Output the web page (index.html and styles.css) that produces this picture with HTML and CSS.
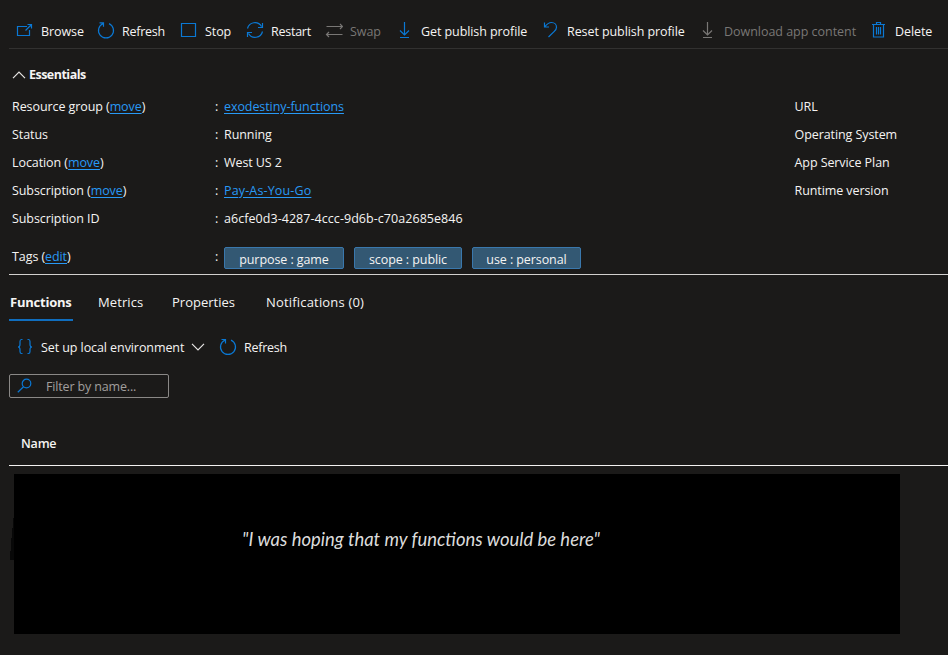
FILE: index.html
```html
<!DOCTYPE html>
<html lang="en">
<head>
<meta charset="utf-8">
<title>Function App</title>
<link rel="stylesheet" href="styles.css">
</head>
<body>
<nav class="toolbar">
  <button class="cmd"><svg class="icon" viewBox="0 0 18 18"><path d="M11 5.500H1.500v9h12V9M9.500 9.500L15 4M11.500 3.500h4v4"/></svg><span>Browse</span></button>
  <button class="cmd"><svg class="icon" viewBox="0 0 18 18"><path d="M12 2.600A7.500 7.500 0 1 1 6 2.600M2.500 1.800h4v4"/></svg><span class="t-refresh">Refresh</span></button>
  <button class="cmd"><svg class="icon" viewBox="0 0 18 18"><path d="M2.500 2.500h14v13h-14z"/></svg><span class="t-stop">Stop</span></button>
  <button class="cmd"><svg class="icon" viewBox="0 0 18 18"><path d="M1.500 7.500A7.600 7.600 0 0 1 15.500 5.500M16.500 2v4.500H12M16.500 10.500A7.600 7.600 0 0 1 2.500 12.500M1.500 16v-4.500H6"/></svg><span class="t-refresh">Restart</span></button>
  <button class="cmd off"><svg class="icon" viewBox="0 0 18 18"><path d="M1.500 5.500h16M15 3l2.500 2.500L15 8M17.500 13.500h-16M4 11l-2.500 2.500L4 16"/></svg><span>Swap</span></button>
  <button class="cmd"><svg class="icon" viewBox="0 0 18 18"><path d="M8.500 1v13M4 9.500l4.500 4.500L13 9.500M4 16.500h9"/></svg><span>Get publish profile</span></button>
  <button class="cmd"><svg class="icon" viewBox="0 0 18 18"><path d="M2.500 1.500v4.500H7M2.500 6C5 2.800 7 1.500 9.500 1.500c3 0 5 2.200 5 4.700 0 1.800-1 3-2.200 4.200L6.500 16"/></svg><span>Reset publish profile</span></button>
  <button class="cmd off"><svg class="icon" viewBox="0 0 18 18"><path d="M8.500 1v13M4 9.500l4.500 4.500L13 9.500M4 16.500h9"/></svg><span class="t-down">Download app content</span></button>
  <button class="cmd"><svg class="icon" viewBox="0 0 18 18"><path d="M2 3.500h13M6.500 3V1.500h4V3M3.500 3.500v12.500h10V3.500M6.500 6v7.500M8.500 6v7.500M10.500 6v7.500"/></svg><span>Delete</span></button>
</nav>

<section class="essentials">
  <h2 class="ess-title"><svg class="chev" viewBox="0 0 14 8"><path d="M1 7.200L7 1.200l6 6"/></svg><span>Essentials</span></h2>
  <div class="ess-body">
    <dl class="props">
      <dt>Resource group (<a href="#">move</a>)</dt><dd><i>:</i><a href="#">exodestiny-functions</a></dd>
      <dt>Status</dt><dd><i>:</i><span>Running</span></dd>
      <dt>Location (<a href="#">move</a>)</dt><dd><i>:</i><span>West US 2</span></dd>
      <dt>Subscription (<a href="#">move</a>)</dt><dd><i>:</i><a href="#" class="t-pay">Pay-As-You-Go</a></dd>
      <dt>Subscription ID</dt><dd><i>:</i><span class="t-guid">a6cfe0d3-4287-4ccc-9d6b-c70a2685e846</span></dd>
    </dl>
    <ul class="labels"><li>URL</li><li>Operating System</li><li>App Service Plan</li><li>Runtime version</li></ul>
  </div>
  <div class="tags">
    <span class="tags-label">Tags (<a href="#">edit</a>)</span><i>:</i>
    <span class="tag tag-a">purpose : game</span><span class="tag tag-b">scope : public</span><span class="tag tag-c">use : personal</span>
  </div>
</section>

<nav class="tabs">
  <a class="tab active">Functions</a><a class="tab">Metrics</a><a class="tab">Properties</a><a class="tab">Notifications (0)</a>
</nav>

<div class="subbar">
  <svg class="icon" viewBox="0 0 18 18"><path d="M6.500 1.500H5.500C4.300 1.500 4 2.300 4 3.500V6.500C4 8 3.200 9 2 9c1.200 0 2 1 2 2.500v2c0 1.200.3 2 1.500 2h1M11.500 1.500h1c1.200 0 1.500.8 1.500 2V6.500C14 8 14.800 9 16 9c-1.200 0-2 1-2 2.500v2c0 1.200-.3 2-1.500 2h-1"/></svg>
  <span class="setup">Set up local environment</span>
  <svg class="chev down" viewBox="0 0 14 8"><path d="M1 .800l6 6 6-6"/></svg>
  <svg class="icon ref" viewBox="0 0 18 18"><path d="M12 2.100A7.500 7.500 0 1 1 6 2.100M2.500 1.500h4v4"/></svg>
  <span class="t-refresh">Refresh</span>
</div>

<label class="filter"><svg class="search" viewBox="0 0 16 16"><circle cx="9.500" cy="5.500" r="4.300"/><path d="M6.500 8.700L.800 14.200"/></svg><span>Filter by name...</span></label>

<div class="thead">Name</div>
<main class="result">
  <svg class="smudge" viewBox="0 0 4 42"><path d="M3 0h1v42H0v-9h1V20h1V10h1z"/></svg>
  <p>"I was hoping that my functions would be here"</p>
</main>
</body>
</html>
```
FILE: styles.css
```css
* { box-sizing: border-box; }
body {
  margin: 0;
  height: 655px;
  overflow: hidden;
  background: #1b1a19;
  color: #f5f4f3;
  font: 12.5px/20px "Open Sans", "Noto Sans", sans-serif;
  letter-spacing: -0.08px;
  white-space: nowrap;
}
a { color: #2899f5; text-underline-offset: 2px; }
svg { fill: none; stroke: #0a78d4; stroke-width: 1.2; flex: none; display: block; }
.icon { width: 18px; height: 18px; }
.toolbar {
  display: grid;
  grid-template-columns: 81px 82px 67px 79px 71px 146px 157px 171px 70px;
  align-items: center;
  height: 49px;
  margin-left: 9px;
  padding: 12px 0 0 7px;
  border-bottom: 1px solid #323130;
}
.cmd {
  display: flex;
  gap: 7px;
  padding: 0;
  border: 0;
  background: none;
  color: inherit;
  font: inherit;
  letter-spacing: inherit;
}
.cmd span { height: 18px; line-height: 22px; }
.t-refresh { letter-spacing: -0.25px; }
.t-stop { padding-left: 1px; }
.t-down { letter-spacing: -0.03px; }
.off { color: #797775; }
.off svg { stroke: #797775; }

.essentials { height: 226px; margin-left: 9px; border-bottom: 1px solid #d2d0ce; }
.ess-title {
  display: flex;
  align-items: center;
  gap: 3px;
  margin: 0;
  padding: 16px 0 0 3px;
  font-size: 12.5px;
  line-height: 20px;
  letter-spacing: -0.52px;
}
.chev { width: 14px; height: 8px; stroke: #e8e6e4; }
.ess-body { display: flex; padding: 8px 0 0 3px; line-height: 28px; }
.props { display: grid; grid-template-columns: 203px 579.5px; margin: 0; }
.props dt, .props dd { margin: 0; height: 28px; }
.t-pay { letter-spacing: 0.15px; }
.t-guid { letter-spacing: 0.05px; }
i { display: inline-block; width: 9px; font-style: normal; }
.labels { list-style: none; margin: 0; padding: 0; }
.tags { display: flex; padding: 14px 0 0 3px; }
.tags-label { width: 203px; }
.tag {
  height: 22px;
  border: 1px solid #3a78ad;
  border-radius: 2px;
  background: #335873;
  text-align: center;
  line-height: 23px;
  margin-right: 10px;
}
.tag-a { width: 120px; }
.tag-b { width: 108px; }
.tag-c { width: 109px; }

.tabs { display: flex; height: 46px; padding: 17px 0 0 9px; font-size: 13px; letter-spacing: 0.1px; }
.tab { color: inherit; width: 74px; height: 29px; line-height: 20px; }
.tab:nth-child(1) { width: 64px; margin-right: 25px; padding-left: 1px; border-bottom: 2px solid #106ebe; font-weight: 700; letter-spacing: -0.22px; }
.tab:nth-child(3) { width: 94px; letter-spacing: 0; }
.tab:nth-child(4) { letter-spacing: 0.18px; }

.subbar { display: flex; align-items: center; height: 18px; margin-top: 17px; padding-left: 16px; }
.subbar span { padding-top: 2px; }
.setup { margin-left: 7px; width: 144px; }
.down { margin-left: 6px; }
.ref { margin: 0 7px 0 14px; }

.filter {
  display: flex;
  align-items: center;
  width: 160px;
  height: 24px;
  margin: 18px 0 0 9px;
  padding-left: 7px;
  border: 1px solid #8a8886;
  border-radius: 2px;
  color: #a19f9d;
}
.search { width: 16px; height: 16px; }
.filter span { margin-left: 13px; padding-top: 2px; letter-spacing: -0.15px; }

.thead {
  height: 68px;
  margin-left: 9px;
  padding: 36px 0 0 12px;
  border-bottom: 1px solid #f3f2f1;
  font-weight: 600;
  letter-spacing: -0.2px;
}
.result { position: relative; width: 886px; height: 160px; margin: 8px 0 0 14px; background: #000; }
.smudge { position: absolute; left: -4px; top: 44px; width: 4px; height: 42px; fill: #080808; stroke: none; }
.result p {
  margin: 0;
  padding: 53px 0 0 228px;
  color: #dcdcdc;
  font: italic 18.45px/24px Lato, "Open Sans", sans-serif;
  letter-spacing: 0;
}
```
